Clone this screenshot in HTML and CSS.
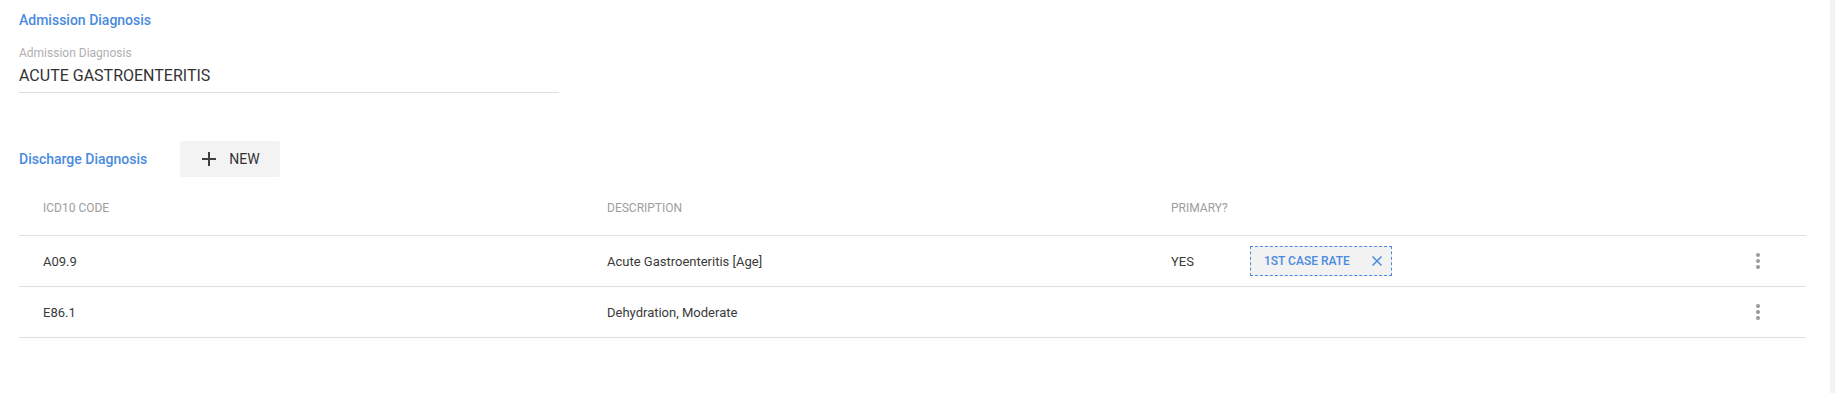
FILE: index.html
```html
<!DOCTYPE html>
<html>
<head>
<meta charset="utf-8">
<link rel="stylesheet" href="styles.css">
</head>
<body>
<div class="page">
  <main class="main">
    <h2 class="section-title">Admission Diagnosis</h2>
    <div class="field">
      <div class="field-label">Admission Diagnosis</div>
      <div class="field-value">ACUTE GASTROENTERITIS</div>
    </div>

    <div class="section-row">
      <h2 class="section-title">Discharge Diagnosis</h2>
      <button class="btn-new">
        <svg class="plus" width="14" height="14" viewBox="0 0 14 14"><path d="M7 0v14M0 7h14" stroke="#3c4043" stroke-width="2" fill="none"/></svg>
        <span>NEW</span>
      </button>
    </div>

    <div class="table">
      <div class="tr th">
        <div class="td">ICD10 CODE</div>
        <div class="td">DESCRIPTION</div>
        <div class="td">PRIMARY?</div>
        <div class="td"></div>
      </div>
      <div class="tr">
        <div class="td">A09.9</div>
        <div class="td">Acute Gastroenteritis [Age]</div>
        <div class="td primary">
          <span class="yes">YES</span>
          <span class="chip"><span>1ST CASE RATE</span>
            <svg class="chip-x" width="10" height="10" viewBox="0 0 10 10"><path d="M0.5 0.5l9 9M9.5 0.5l-9 9" stroke="#4a8be0" stroke-width="1.5" fill="none"/></svg>
          </span>
        </div>
        <div class="td actions"><span class="dots"><i></i><i></i><i></i></span></div>
      </div>
      <div class="tr">
        <div class="td">E86.1</div>
        <div class="td">Dehydration, Moderate</div>
        <div class="td"></div>
        <div class="td actions"><span class="dots"><i></i><i></i><i></i></span></div>
      </div>
    </div>
  </main>
  <div class="scrollbar"></div>
</div>
</body>
</html>
```
FILE: styles.css
```css
* { box-sizing: border-box; }
html, body { margin: 0; padding: 0; background: #fff; }
body { font-family: Roboto, "Liberation Sans", Arial, sans-serif; color: #333; }
.page { display: flex; height: 403px; }
.main { flex: 1; padding: 10px 24px 0 19px; }
.scrollbar { width: 5px; height: 393px; background: #f3f3f3; }

.section-title {
  margin: 0;
  font-size: 14px;
  line-height: 20px;
  font-weight: 500;
  color: #4a8be0;
}

.field { width: 540px; margin-top: 15px; border-bottom: 1px solid #dedede; padding-bottom: 4px; }
.field-label { font-size: 12px; line-height: 16px; color: #b0b0b0; }
.field-value { margin-top: 3px; font-size: 16px; line-height: 24px; color: #333; }

.section-row { display: flex; align-items: center; margin-top: 48px; height: 36px; }
.btn-new {
  margin-left: 33px;
  width: 100px;
  height: 36px;
  border: none;
  border-radius: 2px;
  background: #f3f3f3;
  display: flex;
  align-items: center;
  padding: 0 0 0 22px;
  font-family: inherit;
  font-size: 14px;
  color: #333;
  cursor: pointer;
}
.btn-new .plus { display: block; margin-right: 13px; }

.table { margin-top: 3px; }
.tr {
  display: grid;
  grid-template-columns: 564px 564px 1fr 96px;
  align-items: center;
  height: 51px;
  border-bottom: 1px solid #e0e0e0;
  font-size: 13px;
  color: #3a3a3a;
}
.tr.th { height: 56px; font-size: 12px; color: #9e9e9e; }
.td { padding-left: 24px; display: flex; align-items: center; }
.yes { width: 79px; }
.chip {
  display: inline-flex;
  align-items: center;
  justify-content: space-between;
  height: 30px;
  width: 142px;
  padding: 0 9px 0 13px;
  border: 1px dashed #4a8be0;
  background: #f2f2f2;
  color: #4a8be0;
  font-size: 12px;
  font-weight: 500;
}
.chip-x { display: block; }
.actions { padding-left: 0; justify-content: center; }
.dots { display: flex; flex-direction: column; gap: 2px; }
.dots i { display: block; width: 4px; height: 4px; border-radius: 50%; background: #9a9a9a; }
```
